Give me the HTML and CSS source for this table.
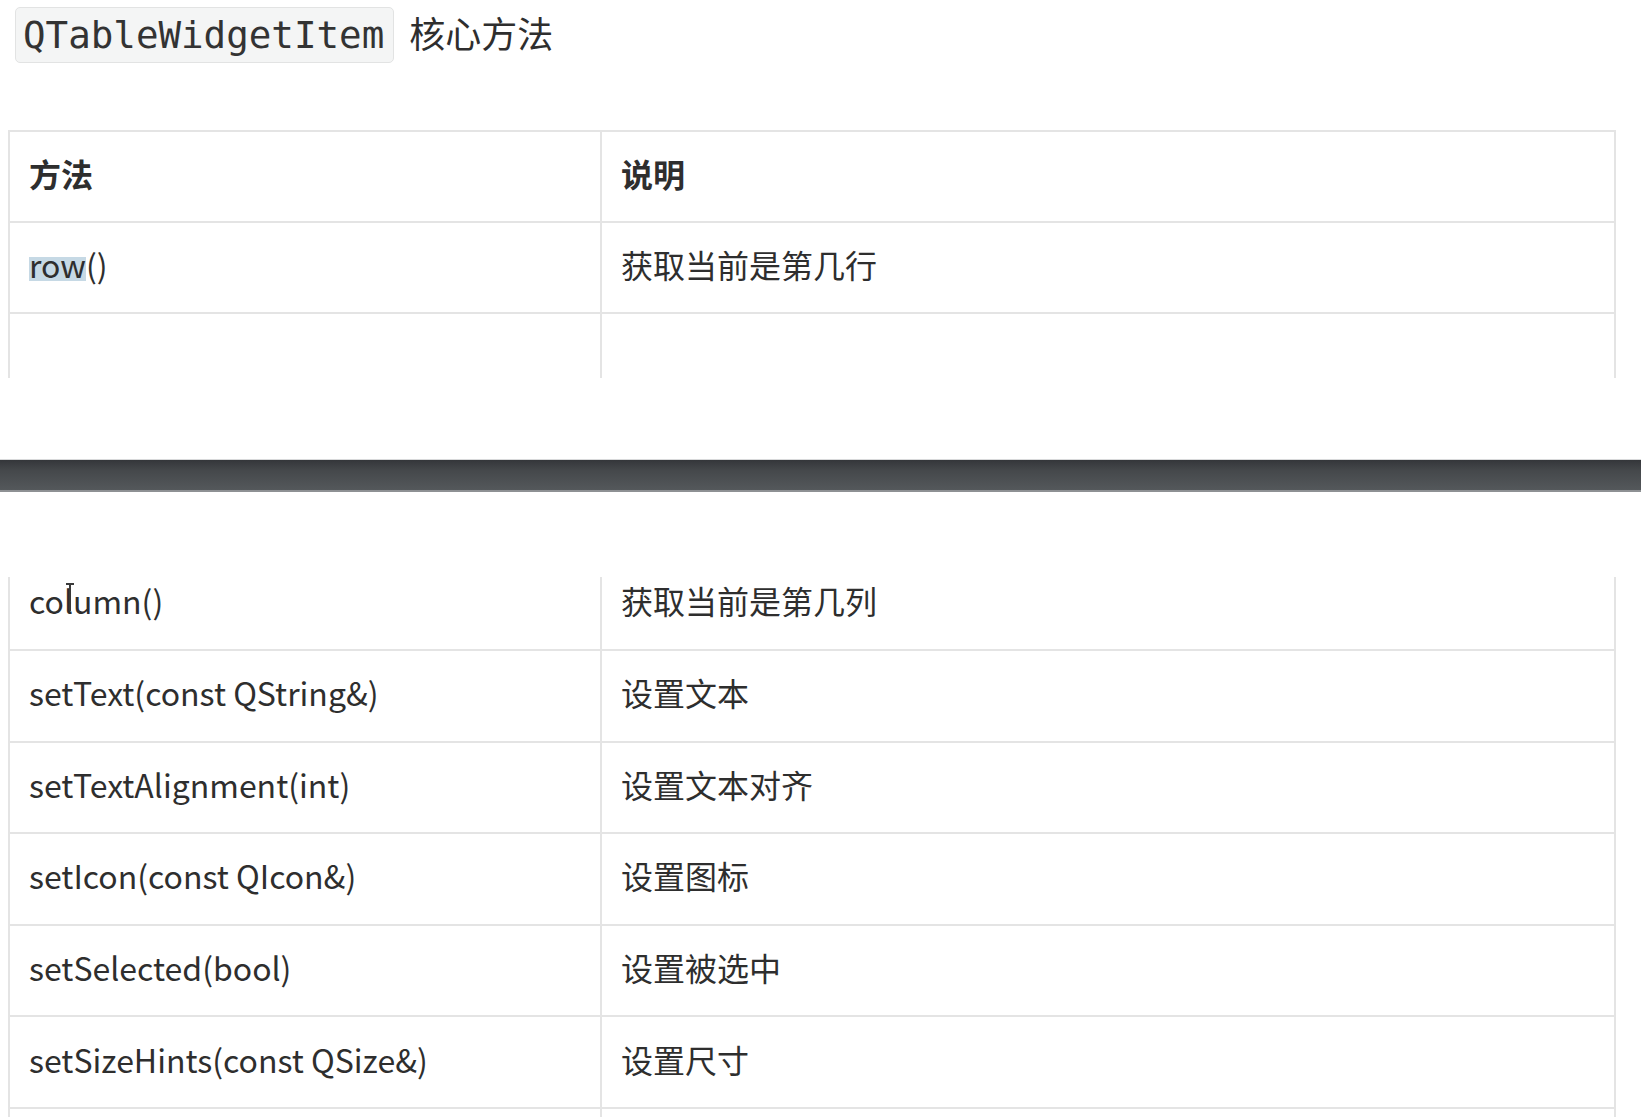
FILE: index.html
```html
<!DOCTYPE html>
<html lang="zh-CN">
<head>
<meta charset="utf-8">
<title>QTableWidgetItem 核心方法</title>
<link rel="stylesheet" href="styles.css">
</head>
<body>
<section class="pane-top">
  <h2 class="heading"><code class="badge">QTableWidgetItem</code><span class="title">核心方法</span></h2>
  <div class="clip clip-top">
    <table class="methods">
      <colgroup><col class="c1"><col class="c2"></colgroup>
      <tr class="head"><th>方法</th><th>说明</th></tr>
      <tr><td><span class="sel">row</span>()</td><td>获取当前是第几行</td></tr>
      <tr><td></td><td></td></tr>
    </table>
  </div>
</section>
<div class="bar"></div>
<section class="pane-bottom">
  <div class="clip clip-bottom">
    <table class="methods cont">
      <colgroup><col class="c1"><col class="c2"></colgroup>
      <tr class="first"><td>co<span class="caret">l</span>umn()</td><td>获取当前是第几列</td></tr>
      <tr><td>setText(const QString&amp;)</td><td>设置文本</td></tr>
      <tr><td>setTextAlignment(int)</td><td>设置文本对齐</td></tr>
      <tr><td>setIcon(const QIcon&amp;)</td><td>设置图标</td></tr>
      <tr><td>setSelected(bool)</td><td>设置被选中</td></tr>
      <tr><td>setSizeHints(const QSize&amp;)</td><td>设置尺寸</td></tr>
      <tr><td></td><td></td></tr>
    </table>
  </div>
</section>
</body>
</html>
```
FILE: styles.css
```css
html, body {
  margin: 0;
  padding: 0;
  background: #ffffff;
}
body {
  width: 1641px;
  height: 1117px;
  overflow: hidden;
  font-family: "Noto Sans CJK SC", "Noto Sans", sans-serif;
  color: #2e2e2e;
}
.pane-top {
  height: 459px;
  overflow: hidden;
}
.heading {
  margin: 0;
  padding: 6px 0 0 15px;
  height: 57px;
  display: flex;
  align-items: center;
  font-weight: normal;
}
.badge {
  display: inline-flex;
  align-items: center;
  height: 56px;
  box-sizing: border-box;
  padding: 0 9px 0 7px;
  font-family: "DejaVu Sans Mono", "Liberation Mono", monospace;
  font-size: 37.5px;
  color: #333333;
  background: #f4f5f5;
  border: 1px solid #e2e3e3;
  border-radius: 5px;
}
.title {
  margin-left: 15px;
  padding-bottom: 6px;
  font-size: 36px;
  color: #2e2e2e;
  line-height: 1;
}
.clip {
  margin-left: 8px;
  width: 1608px;
  overflow: hidden;
}
.clip-top {
  margin-top: 67px;
  height: 248px;
}
.methods {
  width: 1608px;
  border-collapse: collapse;
  table-layout: fixed;
  font-size: 32px;
}
.c1 { width: 592px; }
.methods th, .methods td {
  border: 2px solid #e4e4e4;
  height: 91px;
  padding: 0 0 7px 19px;
  text-align: left;
  vertical-align: middle;
  box-sizing: border-box;
  white-space: nowrap;
}
.methods th {
  font-weight: bold;
}
.sel {
  background: linear-gradient(transparent 34%, #c6d9e5 34%, #c6d9e5 86%, transparent 86%);
}
.bar {
  height: 33px;
  box-sizing: border-box;
  border-top: 1px solid #d8d9da;
  border-bottom: 2px solid #8e9194;
  background: linear-gradient(#34363a 0%, #45484b 35%, #54585b 100%);
}
.pane-bottom {
  padding-top: 85px;
}
.clip-bottom {
  height: 540px;
}
.cont td {
  height: 91.6px;
}
.cont tr:first-child td {
  border-top: none;
  height: 72px;
  padding-bottom: 26px;
}
.caret {
  position: relative;
}
.caret::after {
  content: "";
  position: absolute;
  left: 5px;
  top: 7px;
  width: 2px;
  height: 27px;
  background: #3a3a3a;
}
.caret::before {
  content: "";
  position: absolute;
  left: 2px;
  top: 6px;
  width: 8px;
  height: 2px;
  background: #3a3a3a;
}
```
